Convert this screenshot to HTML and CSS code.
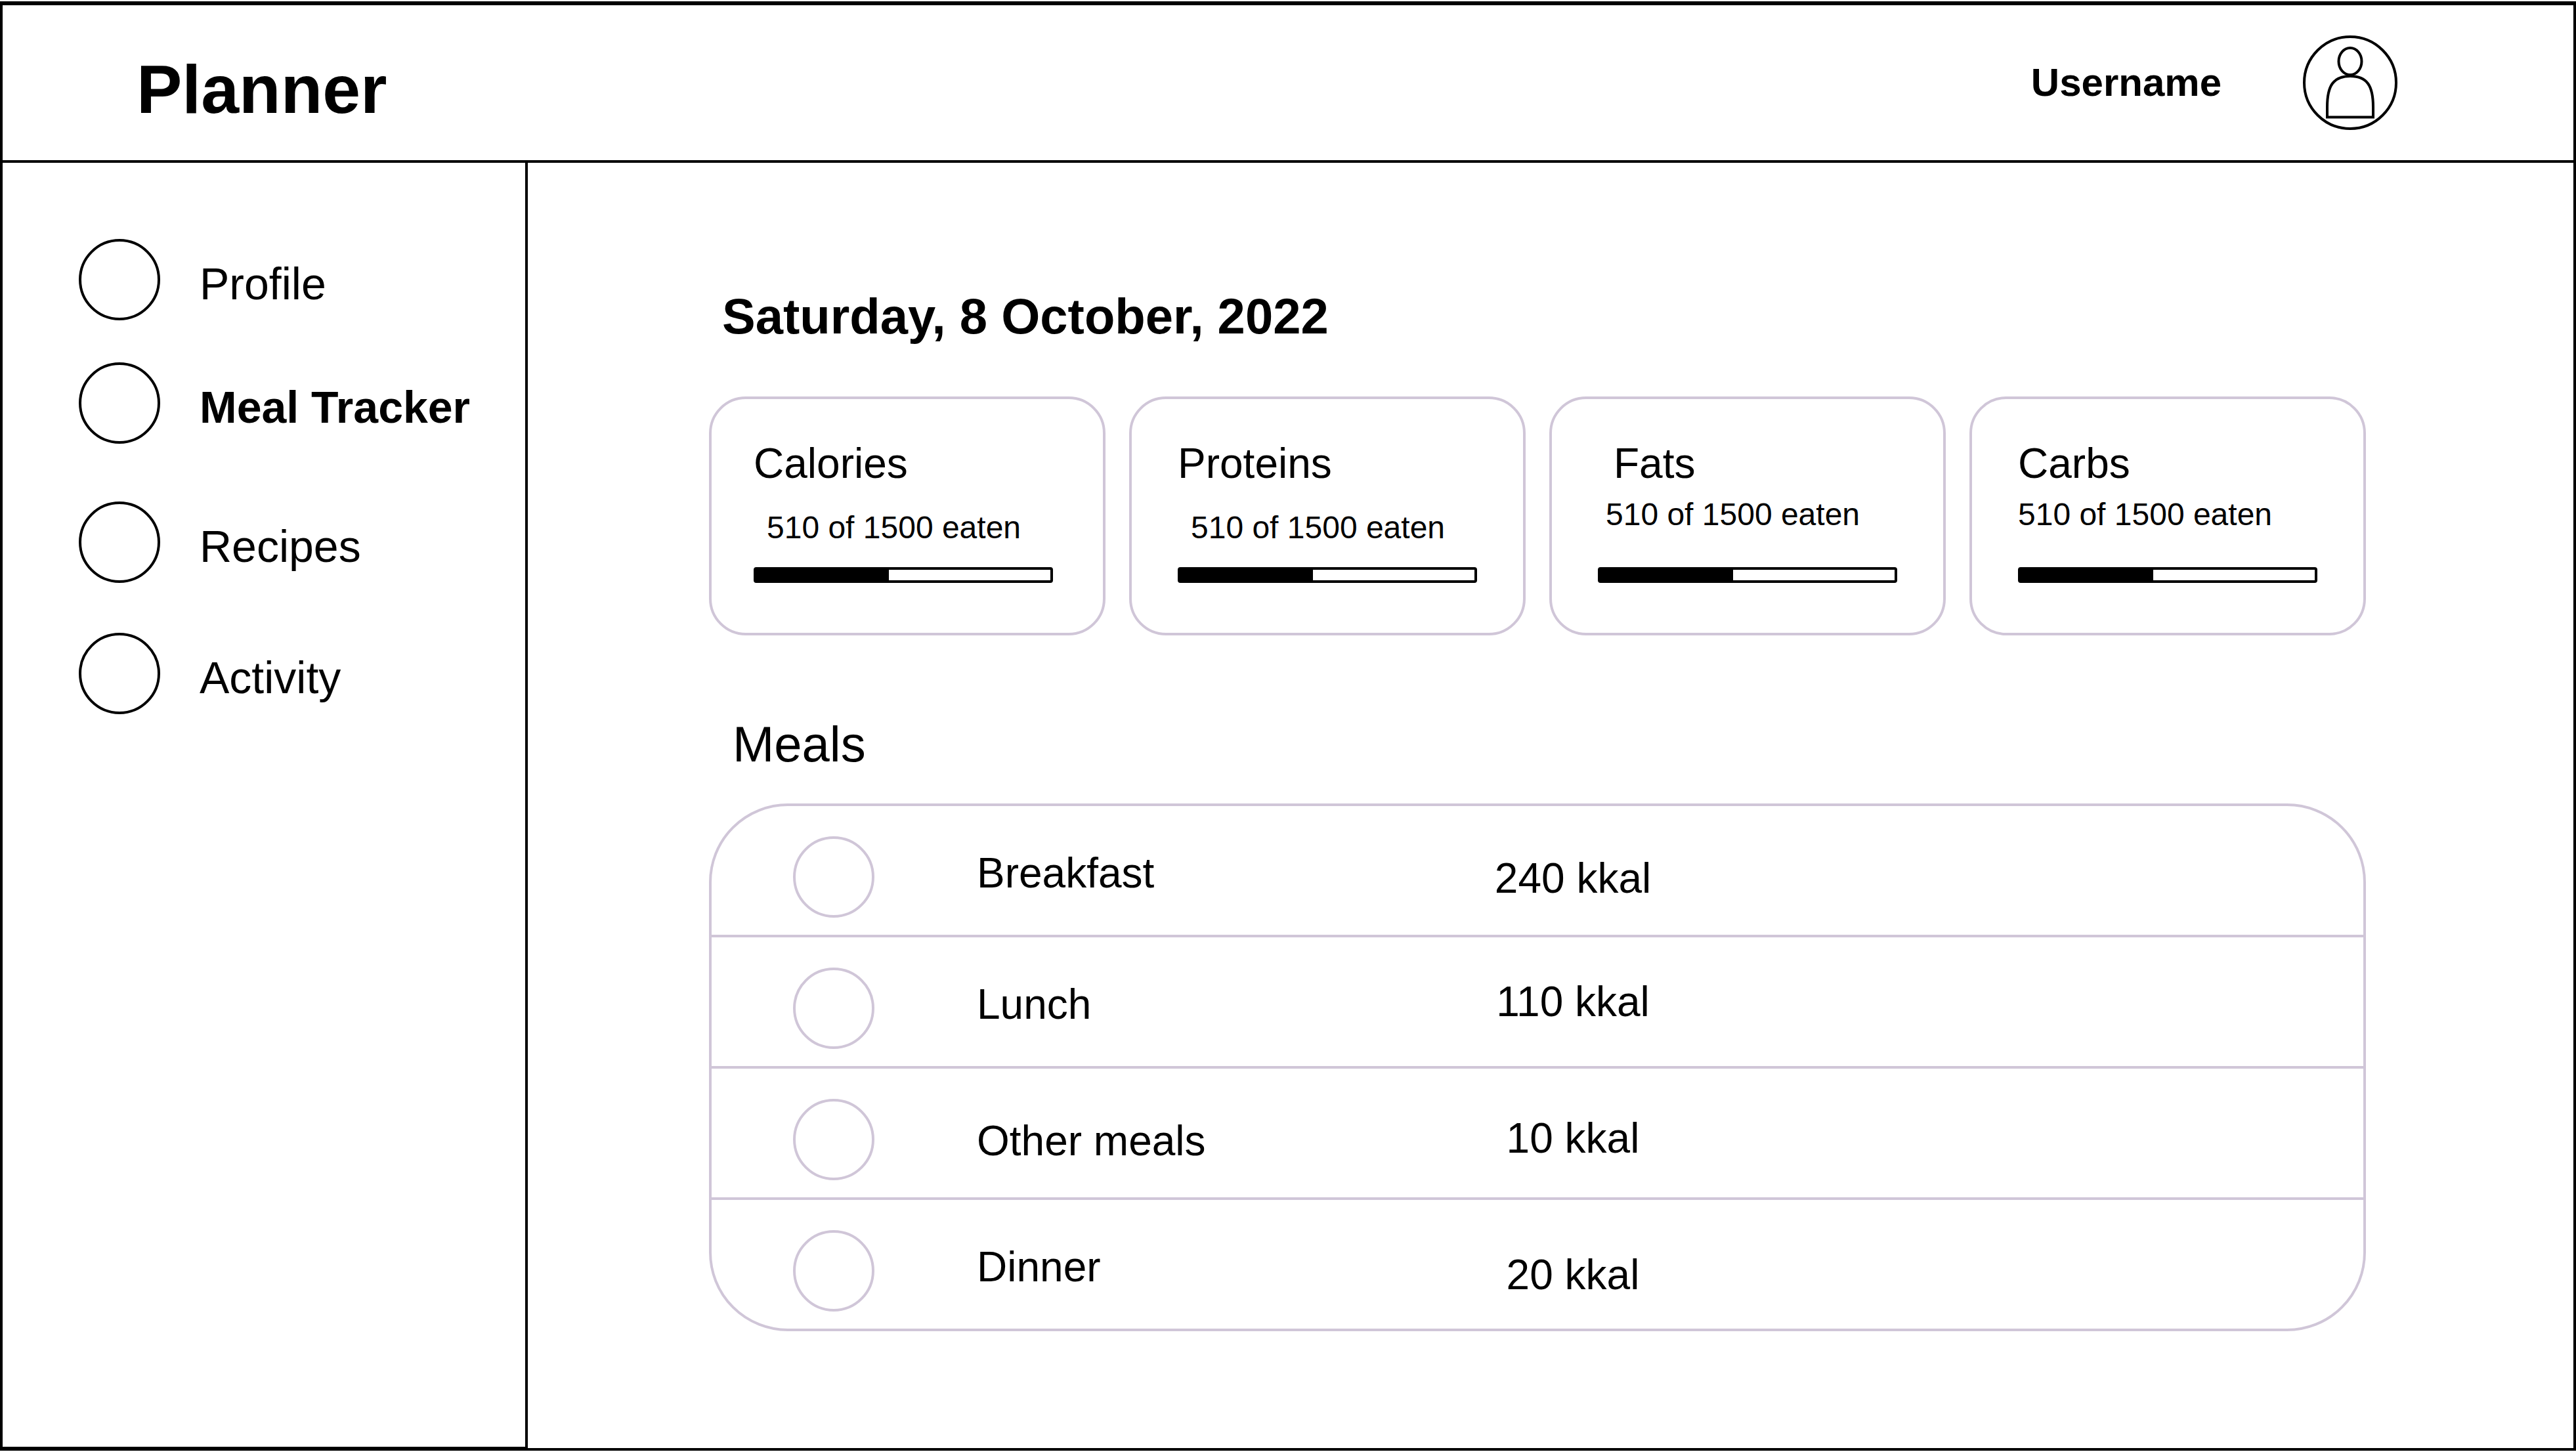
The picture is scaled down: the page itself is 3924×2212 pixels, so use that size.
FILE: index.html
```html
<!DOCTYPE html>
<html lang="en">
<head>
<meta charset="utf-8">
<meta name="viewport" content="width=device-width, initial-scale=1">
<title>Planner</title>
<link rel="stylesheet" href="styles.css">
</head>
<body>
<div class="app">
  <header class="topbar">
    <p class="brand">Planner</p>
    <div class="user">
      <span class="user-name">Username</span>
      <svg class="avatar" viewBox="0 0 144 144" aria-hidden="true">
        <circle cx="72" cy="72" r="70"/>
        <ellipse cx="72" cy="39.5" rx="17.5" ry="20.5"/>
        <path d="M37 124.5V109C37 77 46 62 72 62S107 77 107 109V124.5Z"/>
      </svg>
    </div>
  </header>

  <div class="columns">
    <nav class="sidebar" aria-label="Main">
      <a class="nav-item" href="#profile"><span class="dot"></span><span class="nav-label">Profile</span></a>
      <a class="nav-item nav-item-current" href="#meal-tracker" aria-current="page"><span class="dot"></span><span class="nav-label">Meal Tracker</span></a>
      <a class="nav-item" href="#recipes"><span class="dot"></span><span class="nav-label">Recipes</span></a>
      <a class="nav-item" href="#activity"><span class="dot"></span><span class="nav-label">Activity</span></a>
    </nav>

    <main class="content">
      <h1 class="date">Saturday, 8 October, 2022</h1>

      <section class="cards" aria-label="Daily totals">
        <article class="card card-first">
          <h2 class="card-title"><label for="calories">Calories</label></h2>
          <p class="card-detail indent-md">510 of 1500 eaten</p>
          <progress class="bar" id="calories" max="100" value="45"></progress>
        </article>
        <article class="card">
          <h2 class="card-title"><label for="proteins">Proteins</label></h2>
          <p class="card-detail indent-md">510 of 1500 eaten</p>
          <progress class="bar" id="proteins" max="100" value="45"></progress>
        </article>
        <article class="card card-tight">
          <h2 class="card-title indent-lg"><label for="fats">Fats</label></h2>
          <p class="card-detail indent-sm">510 of 1500 eaten</p>
          <progress class="bar" id="fats" max="100" value="45"></progress>
        </article>
        <article class="card card-tight">
          <h2 class="card-title"><label for="carbs">Carbs</label></h2>
          <p class="card-detail">510 of 1500 eaten</p>
          <progress class="bar" id="carbs" max="100" value="45"></progress>
        </article>
      </section>

      <h2 class="section-title" id="meals">Meals</h2>
      <div class="meals">
        <table class="meals-table" aria-labelledby="meals">
          <tr>
            <td class="meal-icon"><span class="dot dot-soft"></span></td>
            <th class="meal-name drop-2" scope="row">Breakfast</th>
            <td class="meal-energy drop-4">240 kkal</td>
          </tr>
          <tr>
            <td class="meal-icon"><span class="dot dot-soft"></span></td>
            <th class="meal-name drop-2" scope="row">Lunch</th>
            <td class="meal-energy drop-1">110 kkal</td>
          </tr>
          <tr>
            <td class="meal-icon"><span class="dot dot-soft"></span></td>
            <th class="meal-name drop-4" scope="row">Other meals</th>
            <td class="meal-energy drop-3">10 kkal</td>
          </tr>
          <tr>
            <td class="meal-icon"><span class="dot dot-soft"></span></td>
            <th class="meal-name drop-2" scope="row">Dinner</th>
            <td class="meal-energy drop-5">20 kkal</td>
          </tr>
        </table>
      </div>
    </main>
  </div>
</div>
</body>
</html>
```
FILE: styles.css
```css
:root {
  --ink: #000;
  --soft: #d0c6d8;
}

* {
  box-sizing: border-box;
}

body {
  margin: 0;
  background: #fff;
  color: var(--ink);
  font-family: "Liberation Sans", Arial, Helvetica, sans-serif;
}

h1, h2, p {
  margin: 0;
}

/* Frame around the whole page */
body {
  display: flex;
  min-height: 100vh;
  padding: 2px 0;
}

.app {
  flex: 1;
  display: flex;
  flex-direction: column;
  border: 4px solid var(--ink);
}

/* Top bar */
.topbar {
  display: flex;
  justify-content: space-between;
  align-items: center;
  padding: 46px 268px 46px 204px;
  border-top: 2px solid var(--ink);
  border-bottom: 4px solid var(--ink);
}

.brand {
  align-self: flex-end;
  font-size: 104px;
  line-height: 124px;
  font-weight: bold;
}

.user {
  display: flex;
  align-items: center;
  gap: 124px;
}

.user-name {
  font-size: 60px;
  line-height: 72px;
  font-weight: bold;
}

.avatar {
  display: block;
  width: 144px;
  height: 144px;
  fill: #fff;
  stroke: var(--ink);
  stroke-width: 4;
}

.columns {
  flex: 1;
  display: flex;
}

/* Sidebar */
.sidebar {
  flex: none;
  width: 800px;
  display: grid;
  grid-template-rows: 188px 212px 200px 124px;
  align-content: start;
  align-items: start;
  padding: 116px 0 116px 116px;
  border-right: 4px solid var(--ink);
  border-bottom: 2px solid var(--ink);
}

.nav-item {
  display: flex;
  align-items: flex-end;
  gap: 60px;
  color: inherit;
  text-decoration: none;
}

.nav-label {
  font-size: 68px;
  line-height: 112px;
  white-space: nowrap;
}

.nav-item-current {
  font-weight: bold;
}

.dot {
  flex: none;
  display: block;
  width: 124px;
  height: 124px;
  border: 4px solid var(--ink);
  border-radius: 50%;
}

.dot-soft {
  border-color: var(--soft);
}

/* Main column */
.content {
  flex: 1;
  min-width: 0;
  padding: 190px 316px 116px 276px;
}

.date {
  padding-left: 20px;
  font-size: 76px;
  line-height: 88px;
}

.cards {
  display: grid;
  grid-template-columns: repeat(4, 1fr);
  gap: 36px;
  margin-top: 78px;
}

.card {
  display: flex;
  flex-direction: column;
  padding: 62px 70px 76px;
  border: 4px solid var(--soft);
  border-radius: 56px;
}

.card-first {
  padding-left: 64px;
  padding-right: 76px;
}

.card-title {
  font-size: 64px;
  line-height: 72px;
  font-weight: normal;
}

.card-detail {
  margin-top: 32px;
  font-size: 48px;
  line-height: 60px;
}

.card-tight .card-detail {
  margin-top: 12px;
}

.indent-sm {
  padding-left: 12px;
}

.indent-md {
  padding-left: 20px;
}

.indent-lg {
  padding-left: 24px;
}

.card-detail + .bar {
  margin-top: 30px;
}

.card-tight .card-detail + .bar {
  margin-top: auto;
}

.bar {
  appearance: none;
  display: block;
  width: 100%;
  height: 24px;
  border: 4px solid var(--ink);
  border-radius: 4px;
  background: #fff;
}

.bar::-webkit-progress-bar {
  background: #fff;
}

.bar::-webkit-progress-value {
  background: var(--ink);
}

.bar::-moz-progress-bar {
  background: var(--ink);
}

/* Meals */
.section-title {
  margin-top: 122px;
  padding-left: 36px;
  font-size: 76px;
  line-height: 88px;
  font-weight: normal;
}

.meals {
  margin-top: 46px;
  border: 4px solid var(--soft);
  border-radius: 120px;
}

.meals-table {
  width: 100%;
  table-layout: fixed;
  border-spacing: 0;
  font-size: 64px;
  line-height: 72px;
}

.meals-table td,
.meals-table th {
  padding: 0;
  vertical-align: top;
  font-weight: normal;
}

.meals-table tr + tr > * {
  border-top: 4px solid var(--soft);
}

.meals-table .meal-icon {
  width: 404px;
  padding: 46px 0 26px 124px;
}

.meals-table .meal-name {
  width: 616px;
  text-align: left;
}

.meals-table .meal-energy {
  padding-right: 912px;
  text-align: center;
}

/* Steps by which the text in a meal row sits lower */
.meals-table .drop-1 {
  padding-top: 62px;
}

.meals-table .drop-2 {
  padding-top: 66px;
}

.meals-table .drop-3 {
  padding-top: 70px;
}

.meals-table .drop-4 {
  padding-top: 74px;
}

.meals-table .drop-5 {
  padding-top: 78px;
}
```
